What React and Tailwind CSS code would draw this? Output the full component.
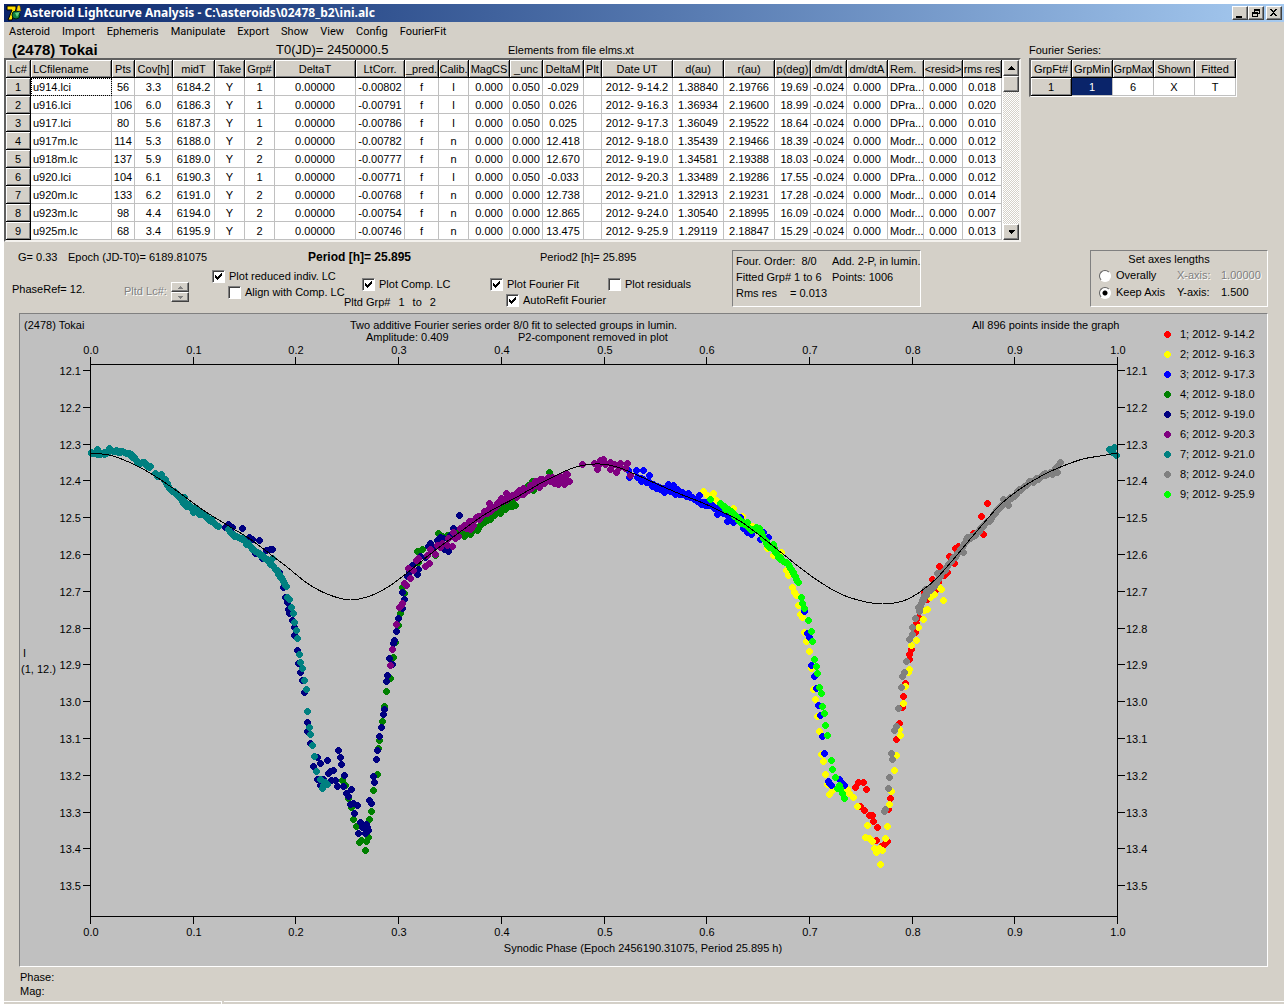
import React from "react";

const menus = ["Asteroid", "Import", "Ephemeris", "Manipulate", "Export", "Show", "View", "Config", "FourierFit"];

const columns = [
  ["Lc#", "w-[25px]"],
  ["LCfilename", "w-[81px]"],
  ["Pts", "w-[23px]"],
  ["Cov[h]", "w-[38px]"],
  ["midT", "w-[42px]"],
  ["Take", "w-[30px]"],
  ["Grp#", "w-[30px]"],
  ["DeltaT", "w-[81px]"],
  ["LtCorr.", "w-[49px]"],
  ["_pred.", "w-[34px]"],
  ["Calib.", "w-[30px]"],
  ["MagCS", "w-[41px]"],
  ["_unc", "w-[33px]"],
  ["DeltaM", "w-[41px]"],
  ["Plt", "w-[18px]"],
  ["Date UT", "w-[71px]"],
  ["d(au)", "w-[51px]"],
  ["r(au)", "w-[51px]"],
  ["p(deg)", "w-[36px]"],
  ["dm/dt", "w-[36px]"],
  ["dm/dtA", "w-[41px]"],
  ["Rem.", "w-[36px]"],
  ["<resid>", "w-[39px]"],
  ["rms res", "w-[39px]"],
];

const rows = [
  ["u914.lci", "56", "3.3", "6184.2", "Y", "1", "0.00000", "-0.00802", "f", "I", "0.000", "0.050", "-0.029", "", "2012- 9-14.2", "1.38840", "2.19766", "19.69", "-0.024", "0.000", "DPra...", "0.000", "0.018"],
  ["u916.lci", "106", "6.0", "6186.3", "Y", "1", "0.00000", "-0.00791", "f", "I", "0.000", "0.050", "0.026", "", "2012- 9-16.3", "1.36934", "2.19600", "18.99", "-0.024", "0.000", "DPra...", "0.000", "0.020"],
  ["u917.lci", "80", "5.6", "6187.3", "Y", "1", "0.00000", "-0.00786", "f", "I", "0.000", "0.050", "0.025", "", "2012- 9-17.3", "1.36049", "2.19522", "18.64", "-0.024", "0.000", "DPra...", "0.000", "0.010"],
  ["u917m.lc", "114", "5.3", "6188.0", "Y", "2", "0.00000", "-0.00782", "f", "n", "0.000", "0.000", "12.418", "", "2012- 9-18.0", "1.35439", "2.19466", "18.39", "-0.024", "0.000", "Modr...", "0.000", "0.012"],
  ["u918m.lc", "137", "5.9", "6189.0", "Y", "2", "0.00000", "-0.00777", "f", "n", "0.000", "0.000", "12.670", "", "2012- 9-19.0", "1.34581", "2.19388", "18.03", "-0.024", "0.000", "Modr...", "0.000", "0.013"],
  ["u920.lci", "104", "6.1", "6190.3", "Y", "1", "0.00000", "-0.00771", "f", "I", "0.000", "0.050", "-0.033", "", "2012- 9-20.3", "1.33489", "2.19286", "17.55", "-0.024", "0.000", "DPra...", "0.000", "0.012"],
  ["u920m.lc", "133", "6.2", "6191.0", "Y", "2", "0.00000", "-0.00768", "f", "n", "0.000", "0.000", "12.738", "", "2012- 9-21.0", "1.32913", "2.19231", "17.28", "-0.024", "0.000", "Modr...", "0.000", "0.014"],
  ["u923m.lc", "98", "4.4", "6194.0", "Y", "2", "0.00000", "-0.00754", "f", "n", "0.000", "0.000", "12.865", "", "2012- 9-24.0", "1.30540", "2.18995", "16.09", "-0.024", "0.000", "Modr...", "0.000", "0.007"],
  ["u925m.lc", "68", "3.4", "6195.9", "Y", "2", "0.00000", "-0.00746", "f", "n", "0.000", "0.000", "13.475", "", "2012- 9-25.9", "1.29119", "2.18847", "15.29", "-0.024", "0.000", "Modr...", "0.000", "0.013"],
];

// dots: single measurements, runs: densely sampled stretches [spread, path]
const series = [
  {
    label: "1; 2012- 9-14.2",
    color: "#ff0000",
    dots: "987,503 981,516 983,534 973,533 958,546 955,548 962,547 949,556 954,563 939,566 947,572 944,575 932,579 938,582 935,590 927,599 924,592 918,617 916,623 915,632 911,649 909,654 909,659 905,683 903,696 902,707 899,723 896,739 890,798 888,809 858,782 863,782 855,787 866,789 860,806 864,810 869,815 872,815 873,821 877,827 876,840 887,841 884,844 881,846",
    runs: [],
  },
  {
    label: "2; 2012- 9-16.3",
    color: "#ffff00",
    dots: "703,491 707,495 713,493 712,497 716,500 733,508 742,516 752,526 767,548 773,555 781,552 786,570 788,575 792,587 794,592 796,595 798,605 800,614 802,617 804,632 806,641 809,651 811,668 813,689 815,699 817,716 819,731 821,754 823,761 825,774 827,784 829,794 832,790 847,789 849,793 853,797 857,806 867,825 865,837 869,838 872,841 874,848 876,852 879,848 882,850 880,864 885,838 887,826 889,804 891,791 894,770 896,755 900,735 899,729 903,703 905,686 909,669 908,672 911,645 916,640 918,627 923,619 927,609 924,610 930,597 934,594 941,589 938,586 943,600 938,579",
    runs: [],
  },
  {
    label: "3; 2012- 9-17.3",
    color: "#0000ff",
    dots: "628,470 629,477 636,470 643,470 649,475 637,477 641,481 646,482 652,486 656,488 660,489 664,492 668,484 673,485 671,490 675,494 677,489 682,492 688,493 686,496 695,499 699,495 701,504 705,505 712,505 717,514 716,508 727,521 733,522 740,517 743,528 747,532 751,534 763,532 768,537 760,539 773,545 804,611 807,633 809,637 811,665 814,676 816,688 818,705 820,715 822,736 824,753 828,781 831,785 829,783 839,779 844,785 842,783",
    runs: [[1, "641,479 664,489 688,496 712,506 730,516"]],
  },
  {
    label: "4; 2012- 9-18.0",
    color: "#008000",
    dots: "342,780 345,785 348,798 351,807 353,819 356,826 359,842 361,840 365,850 366,841 368,837 369,819 371,811 373,790 377,774 378,748 379,740 382,721 384,706 386,691 390,678 393,657 395,642 398,625 400,613 402,587 404,593 408,568 417,551 422,549 418,562 435,555 438,533 442,536 447,535 454,531 490,519 500,513 512,506 515,505 509,506 532,481 533,490 549,472 550,475",
    runs: [
      [2, "455,536 466,534 477,529 487,518 497,511 512,504"],
      [2, "516,496 523,490 532,484 540,480"],
    ],
  },
  {
    label: "5; 2012- 9-19.0",
    color: "#000080",
    dots: "225,527 228,524 232,527 242,528 249,537 252,539 259,540 266,550 270,549 272,549 255,553 262,558 279,572 281,578 283,587 285,597 287,602 288,609 289,613 292,620 294,627 294,635 297,650 298,663 300,672 302,680 304,692 307,722 307,731 310,743 317,757 320,763 313,766 327,760 338,750 340,757 341,764 333,770 330,771 328,773 317,779 323,779 320,785 331,780 335,780 337,786 344,775 343,786 351,789 346,793 348,796 350,804 353,803 357,805 354,813 360,822 362,827 366,824 367,827 358,833 365,833 368,830 369,800 371,803 374,782 373,776 376,759 377,750 379,736 381,727 383,714 384,709 386,681 387,675 389,658 392,664 393,643 394,640 396,631 398,618 402,608 404,599 402,592 407,576 409,572 412,565 417,574 418,569 425,557 430,543 428,546 432,547 440,537 443,538 437,540 438,545 448,551 444,549 459,515 453,528 450,535 420,556",
    runs: [],
  },
  {
    label: "6; 2012- 9-20.3",
    color: "#800080",
    dots: "392,649 390,665 396,624 402,603 399,607 401,605 406,585 404,583 410,578 408,568 413,570 418,558 416,560 425,566 429,563 427,555 430,549 435,554 437,545 442,543 440,547 447,545 452,546 448,538 453,532 458,536 455,538 564,484 569,481 567,474 539,487 582,464 594,463 600,460 603,459 597,469 610,462 614,464 620,463 627,463 610,469 616,472 625,468 630,475 598,465 605,464 619,467 489,503 506,493",
    runs: [
      [3, "460,528 476,519 490,508 508,497 523,491 533,485 542,480 552,479"],
      [2, "466,529 473,526"],
      [2, "552,479 566,475"],
      [2, "552,481 560,483"],
    ],
  },
  {
    label: "7; 2012- 9-21.0",
    color: "#008080",
    dots: "91,452 97,449 100,454 104,452 109,448 155,473 159,476 161,474 165,479 167,483 184,497 193,512 287,597 289,599 291,607 293,613 294,622 296,630 297,638 299,654 300,662 302,668 304,680 306,689 307,711 309,727 310,734 312,745 314,756 316,771 320,779 325,782 322,788 327,784 323,785 1109,449 1114,447 1112,452 1116,455 1110,450 272,558",
    runs: [
      [1, "91,453 104,453 109,450 120,451 131,455"],
      [1, "131,455 138,463 144,462 150,467"],
      [1, "155,474 164,479 169,488 177,495"],
      [2, "177,496 186,504 194,510 203,514 211,520"],
      [0, "211,521 218,526"],
      [1, "228,530 234,536 242,539 252,548 262,556 270,562"],
      [1, "270,564 276,569 281,578 286,587"],
    ],
  },
  {
    label: "8; 2012- 9-24.0",
    color: "#808080",
    dots: "1060,462 1058,465 1055,468 1057,472 1003,499 1008,505 967,537 963,552 940,573 937,573 925,589 923,600 918,607 919,611 915,618 912,627 912,634 909,639 906,661 904,672 902,676 901,687 898,708 896,726 894,730 891,753 892,759 889,777 888,788 885,809 884,811",
    runs: [
      [2, "1054,472 1045,474 1033,481 1020,488 1010,498"],
      [1, "1010,498 1000,506 990,519 981,527 975,535"],
      [1, "975,535 966,540 957,553 947,566 940,575 934,585"],
      [1, "934,585 928,591 923,598 919,607"],
    ],
  },
  {
    label: "9; 2012- 9-25.9",
    color: "#00ff00",
    dots: "710,499 747,522 756,527 773,544 798,582 801,597 802,603 804,608 808,620 811,631 812,641 814,659 816,666 817,673 819,687 821,693 822,706 824,713 825,725 827,735 831,760 832,769 835,777 839,785 837,788 842,793 844,798 840,788",
    runs: [
      [1, "720,502 725,508 733,513"],
      [1, "733,514 741,522 751,529 759,529"],
      [2, "759,530 766,542 774,550 780,558"],
      [1, "780,558 788,564 793,573 797,581"],
    ],
  },
];

const fit =
  "91,453 102,454 113,456 131,463 150,473 177,491 203,510 227,525 250,539 270,554 287,567 307,583 327,594 350,600 370,596 388,587 407,573 433,552 460,532 487,513 517,497 543,482 570,469 585,465 600,464 617,467 637,475 657,484 680,494 703,503 720,511 740,521 763,538 783,554 803,570 823,584 843,595 866,602 883,604 903,601 920,592 937,578 957,555 977,531 1000,505 1020,489 1043,475 1063,466 1083,459 1100,456 1117,453";

const parse = (s) => s.split(" ").map((p) => p.split(",").map(Number));

// evenly spaced samples along a path with a little repeatable noise
function sample(spread, path) {
  const pts = parse(path);
  const out = [];
  let n = pts[0][0];
  for (let i = 1; i < pts.length; i++) {
    const [x0, y0] = pts[i - 1];
    const [x1, y1] = pts[i];
    const steps = Math.max(1, Math.round(Math.hypot(x1 - x0, y1 - y0) / 2));
    for (let k = 0; k <= steps; k++) {
      n = (n * 137 + 71) % 1009;
      const dy = (n / 1008 - 0.5) * 2 * spread;
      out.push([Math.round(x0 + ((x1 - x0) * k) / steps), Math.round(y0 + ((y1 - y0) * k) / steps + dy)]);
    }
  }
  return out;
}

function smooth(s) {
  const p = parse(s);
  let d = `M${p[0][0]} ${p[0][1]}`;
  for (let i = 0; i < p.length - 1; i++) {
    const a = p[i - 1] || p[i];
    const b = p[i];
    const c = p[i + 1];
    const e = p[i + 2] || c;
    d += `C${b[0] + (c[0] - a[0]) / 6} ${b[1] + (c[1] - a[1]) / 6} ${c[0] - (e[0] - b[0]) / 6} ${c[1] - (e[1] - b[1]) / 6} ${c[0]} ${c[1]}`;
  }
  return d;
}

function Check({ label, checked, className }) {
  return (
    <label className={`flex h-4 items-center gap-1 whitespace-nowrap ${className || ""}`}>
      <span className="relative block size-[13px]">
        <input
          type="checkbox"
          defaultChecked={checked}
          className="peer block size-[13px] appearance-none border border-t-[#808080] border-l-[#808080] border-r-white border-b-white bg-white shadow-[inset_1px_1px_0_#404040]"
        />
        <svg viewBox="0 0 13 13" className="pointer-events-none absolute inset-0 hidden size-[13px] peer-checked:block" shapeRendering="crispEdges">
          <path d="M3 5h1v1h1v1h1v-1h1v-1h1v-1h1v-1h1v3h-1v1h-1v1h-1v1h-1v1h-1v-1h-1v-1h-1z" />
        </svg>
      </span>
      {label}
    </label>
  );
}

function Radio({ label, checked }) {
  return (
    <label className="flex h-4 items-center gap-[5px] whitespace-nowrap">
      <input
        type="radio"
        name="axes"
        defaultChecked={checked}
        className="size-3 appearance-none rounded-full border border-t-[#606060] border-l-[#606060] border-r-white border-b-white bg-white checked:bg-[radial-gradient(#000_2px,#fff_3px)]"
      />
      {label}
    </label>
  );
}

function Arrow({ up, className }) {
  return (
    <svg viewBox="0 0 7 4" className={className || "h-1 w-[7px]"} shapeRendering="crispEdges" fill="currentColor">
      <path d={up ? "M3 0h1v1h1v1h1v1h1v1h-7v-1h1v-1h1v-1h1z" : "M0 0h7v1h-1v1h-1v1h-1v1h-1v-1h-1v-1h-1v-1z"} />
    </svg>
  );
}

const raised =
  "flex items-center justify-center border border-t-white border-l-white border-r-[#404040] border-b-[#404040] bg-[#d4d0c8] shadow-[inset_-1px_-1px_0_#808080]";
const headCell =
  "overflow-hidden border-r border-b border-black bg-[#d4d0c8] p-0 text-center font-normal shadow-[inset_1px_1px_0_#fff,inset_-1px_-1px_0_#808080]";
const cell = "overflow-hidden border-r border-b border-[#c0c0c0] p-0 text-center";

function LightcurveTable() {
  return (
    <div className="flex w-[1017px] shrink-0 border-2 border-t-[#606060] border-l-[#606060] border-r-[#f4f2ee] border-b-[#f4f2ee] bg-white">
      <table className="w-[996px] table-fixed border-separate border-spacing-0 whitespace-nowrap">
        <thead>
          <tr className="h-[18px]">
            {columns.map(([name, w]) => (
              <th key={name} className={`${headCell} ${w} ${name === "LCfilename" || name === "Rem." ? "pl-[2px] text-left" : ""}`}>
                {name}
              </th>
            ))}
          </tr>
        </thead>
        <tbody>
          {rows.map((r, i) => (
            <tr key={r[0]} className="h-[18px]">
              <th className={headCell}>{i + 1}</th>
              {r.map((v, j) => (
                <td
                  key={j}
                  className={`${cell} ${j === 0 || j === 20 ? "pl-[2px] text-left" : ""} ${j === 17 ? "pr-[2px] text-right" : ""} ${i === 0 && j === 0 ? "outline-1 -outline-offset-1 outline-dotted outline-black" : ""}`}
                >
                  {v}
                </td>
              ))}
            </tr>
          ))}
        </tbody>
      </table>
      <div className="ml-px flex w-4 flex-col bg-[repeating-conic-gradient(#fff_0_25%,#d4d0c8_0_50%)] bg-[length:2px_2px]">
        <button aria-label="Scroll up" className={`${raised} h-4`}>
          <Arrow up />
        </button>
        <div className={`${raised} h-4`} />
        <button aria-label="Scroll down" className={`${raised} mt-auto h-4`}>
          <Arrow />
        </button>
      </div>
    </div>
  );
}

function FourierTable() {
  return (
    <div className="w-[208px] border-2 border-b border-r border-t-[#606060] border-l-[#606060] border-r-white border-b-white bg-white">
      <table className="w-[205px] table-fixed border-separate border-spacing-0 whitespace-nowrap">
        <thead>
          <tr className="h-[18px]">
            {["GrpFt#", "GrpMin", "GrpMax", "Shown", "Fitted"].map((h) => (
              <th key={h} className={headCell}>
                {h}
              </th>
            ))}
          </tr>
        </thead>
        <tbody>
          <tr className="h-[18px]">
            <th className={headCell}>1</th>
            <td className={`${cell} bg-[#0a246a] text-white`}>1</td>
            <td className={cell}>6</td>
            <td className={cell}>X</td>
            <td className={cell}>T</td>
          </tr>
        </tbody>
      </table>
    </div>
  );
}

function Plot() {
  const xs = Array.from({ length: 11 }, (_, i) => [90 + Math.round(i * 102.7), (i / 10).toFixed(1)]);
  const ys = Array.from({ length: 15 }, (_, i) => [370 + Math.round(i * 36.8), (12.1 + i / 10).toFixed(1)]);
  return (
    <svg viewBox="20 344 1135 612" className="block w-full" fontSize="11" role="img" aria-label="Lightcurve plot">
      <g shapeRendering="crispEdges">
        {series.map((s) => (
          <g key={s.label} fill={s.color}>
            {[...parse(s.dots), ...s.runs.flatMap(([w, p]) => sample(w, p))].map(([x, y], i) => (
              <path key={i} d={`M${x - 1} ${y - 3}h3v1h1v1h1v3h-1v1h-1v1h-3v-1h-1v-1h-1v-3h1v-1h1z`} />
            ))}
          </g>
        ))}
        <path d={smooth(fit)} fill="none" stroke="#000" />
        <path d="M90 364h1028v1h-1028zM90 916h1028v1h-1028zM90 364h1v553h-1zM1117 364h1v553h-1z" />
        {xs.map(([x]) => (
          <path key={x} d={`M${x} 357h1v7h-1zM${x} 917h1v7h-1z`} />
        ))}
        {ys.map(([y]) => (
          <path key={y} d={`M83 ${y}h7v1h-7zM1118 ${y}h7v1h-7z`} />
        ))}
      </g>
      {xs.map(([x, t]) => (
        <g key={t} textAnchor="middle">
          <text x={x + 1} y="354">{t}</text>
          <text x={x + 1} y="936">{t}</text>
        </g>
      ))}
      {ys.map(([y, t]) => (
        <g key={t}>
          <text x="81" y={y + 5} textAnchor="end">{t}</text>
          <text x="1126" y={y + 5}>{t}</text>
        </g>
      ))}
      <text x="23" y="657">I</text>
      <text x="21" y="673">(1, 12.)</text>
      <text x="643" y="952" textAnchor="middle">Synodic Phase (Epoch 2456190.31075, Period 25.895 h)</text>
    </svg>
  );
}

function TitleBar() {
  return (
    <header className="flex h-[18px] items-center bg-linear-to-r from-[#0a246a] to-[#a6caf0] pr-[2px] pl-[2px]">
      <svg viewBox="0 0 16 16" className="size-4">
        <path d="M1 1h9v3L6 15H2L6 5H1z" fill="#ffe000" stroke="#000" />
        <path d="M13 0c-3 2-1 4-3 6h5c-1-2 0-4-2-6z" fill="#ffd800" stroke="#604000" strokeWidth="0.5" />
        <circle cx="10" cy="10" r="4" fill="#108040" stroke="#002010" />
        <path d="M9 8l5-1-3 5z" fill="#60d080" />
      </svg>
      <h1 className="ml-[2px] font-[Noto_Sans,sans-serif] text-[12px] font-bold text-white">
        Asteroid Lightcurve Analysis - C:\asteroids\02478_b2\ini.alc
      </h1>
      <div className="ml-auto flex">
        <button aria-label="Minimize" className={`${raised} h-[14px] w-4`}>
          <svg viewBox="0 0 10 10" className="size-[10px]" shapeRendering="crispEdges">
            <path d="M1 8h6v2h-6z" />
          </svg>
        </button>
        <button aria-label="Restore" className={`${raised} h-[14px] w-4`}>
          <svg viewBox="0 0 10 10" className="size-[10px]" shapeRendering="crispEdges">
            <path d="M3 1h6v5h-2v-1h1v-2h-4v1h-1zM1 4h6v5h-6zM2 6v2h4v-2z" fillRule="evenodd" />
          </svg>
        </button>
        <button aria-label="Close" className={`${raised} ml-[2px] h-[14px] w-4`}>
          <svg viewBox="0 0 10 10" className="size-[10px]" shapeRendering="crispEdges">
            <path d="M1 1h2v1h1v1h1v-1h1v-1h2v1h-1v1h-1v1h-1v1h1v1h1v1h1v1h-2v-1h-1v-1h-1v1h-1v1h-2v-1h1v-1h1v-1h1v-1h-1v-1h-1v-1h-1z" />
          </svg>
        </button>
      </div>
    </header>
  );
}

const sunken = "border border-t-[#808080] border-l-[#808080] border-r-white border-b-white";
const greyed = "text-[#808080] [text-shadow:1px_1px_0_#fff]";

function Controls() {
  return (
    <section className="flex h-[71px] items-start whitespace-nowrap pt-2">
      <div className="w-[728px] shrink-0">
        <div className="flex h-[14px] items-center pl-[14px]">
          <span className="w-[50px]">G= 0.33</span>
          <span className="w-[240px]">Epoch (JD-T0)= 6189.81075</span>
          <b className="w-[232px] text-[12px]">Period [h]= 25.895</b>
          <span>Period2 [h]= 25.895</span>
        </div>
        <div className="flex pt-1 pl-2">
          <span className="w-[112px] pt-[14px]">PhaseRef= 12.</span>
          <div className="flex w-[88px] items-start gap-[5px] pt-[14px]">
            <span className={`${greyed} w-[42px] pt-[2px]`}>Pltd Lc#:</span>
            <div className="flex w-[18px] flex-col text-[#808080]">
              <button aria-label="Next" disabled className={`${raised} h-[10px]`}>
                <Arrow up className="h-[3px] w-[5px]" />
              </button>
              <button aria-label="Previous" disabled className={`${raised} h-[10px]`}>
                <Arrow className="h-[3px] w-[5px]" />
              </button>
            </div>
          </div>
          <div className="w-[132px]">
            <Check label="Plot reduced indiv. LC" checked />
            <Check label="Align with Comp. LC" className="pl-4" />
          </div>
          <div className="w-[146px] pt-2">
            <Check label="Plot Comp. LC" checked className="pl-[18px]" />
            <div className="flex h-5 items-center gap-2">
              <span>Pltd Grp#</span>
              <span>1</span>
              <span>to</span>
              <span>2</span>
            </div>
          </div>
          <div className="w-[118px] pt-2">
            <Check label="Plot Fourier Fit" checked />
            <Check label="AutoRefit Fourier" checked className="pl-4" />
          </div>
          <div className="pt-2">
            <Check label="Plot residuals" />
          </div>
        </div>
      </div>
      <div className={`${sunken} grid h-[57px] w-[189px] grid-cols-[96px_1fr] content-start pt-[2px] pl-[3px] leading-4`}>
        <span>Four. Order:&nbsp; 8/0</span>
        <span>Add. 2-P, in lumin.</span>
        <span>Fitted Grp# 1 to 6</span>
        <span>Points: 1006</span>
        <span className="flex">
          <span className="w-[54px]">Rms res</span>= 0.013
        </span>
      </div>
      <fieldset className={`${sunken} mr-4 ml-auto h-[57px] w-[178px] pl-2`}>
        <div className="-ml-2 h-4 pr-5 text-center leading-4">Set axes lengths</div>
        <div className="grid grid-cols-[78px_44px_1fr] items-center leading-[17px]">
          <Radio label="Overally" />
          <span className={greyed}>X-axis:</span>
          <span className={greyed}>1.00000</span>
          <Radio label="Keep Axis" checked />
          <span>Y-axis:</span>
          <span>1.500</span>
        </div>
      </fieldset>
    </section>
  );
}

function Graph() {
  return (
    <section className={`${sunken} mr-4 ml-[15px] flex bg-[#c0c0c0]`}>
      <div className="flex-1 pb-[10px]">
        <div className="h-[30px] pt-[5px] pl-1 leading-3 whitespace-nowrap">
          <div className="flex">
            <span className="w-[326px]">(2478) Tokai</span>
            <span className="w-[622px]">Two additive Fourier series order 8/0 fit to selected groups in lumin.</span>
            <span>All 896 points inside the graph</span>
          </div>
          <div className="flex pl-[342px]">
            <span className="w-[152px]">Amplitude: 0.409</span>
            <span>P2-component removed in plot</span>
          </div>
        </div>
        <Plot />
      </div>
      <ul className="w-28 pt-[10px]">
        {series.map((s) => (
          <li key={s.label} className="flex h-5 items-center gap-[9px] pl-[9px]">
            <svg viewBox="0 0 7 7" className="size-[7px]" fill={s.color} shapeRendering="crispEdges">
              <path d="M2 0h3v1h1v1h1v3h-1v1h-1v1h-3v-1h-1v-1h-1v-3h1v-1h1z" />
            </svg>
            {s.label}
          </li>
        ))}
      </ul>
    </section>
  );
}

function App() {
  return (
    <div className="min-h-screen bg-white px-1 pt-1 font-[Liberation_Sans,Arial,sans-serif] text-[11px] leading-[14px] text-black">
      <div className="flex min-h-[calc(100vh-4px)] flex-col bg-[#d4d0c8]">
        <TitleBar />
        <nav className="flex h-5 items-center gap-3 pl-[5px] font-[Roboto,sans-serif] text-[11px]">
          {menus.map((m) => (
            <button key={m}>{m}</button>
          ))}
        </nav>
        <div className="flex gap-2">
          <div>
            <div className="flex h-4 items-center pl-2 whitespace-nowrap">
              <b className="w-[264px] text-[15px]">(2478) Tokai</b>
              <span className="w-[232px] text-[13px]">T0(JD)= 2450000.5</span>
              <span>Elements from file elms.xt</span>
            </div>
            <LightcurveTable />
          </div>
          <div>
            <div className="flex h-4 items-center">Fourier Series:</div>
            <FourierTable />
          </div>
        </div>
        <Controls />
        <Graph />
        <div className="pt-[3px] pl-4">
          <div>Phase:</div>
          <div>Mag:</div>
        </div>
        <footer className="mt-auto flex h-[3px] gap-[2px]">
          <div className="w-[218px] border-t border-r border-white" />
          <div className="flex-1 border-t border-white" />
        </footer>
      </div>
    </div>
  );
}

export default App;
